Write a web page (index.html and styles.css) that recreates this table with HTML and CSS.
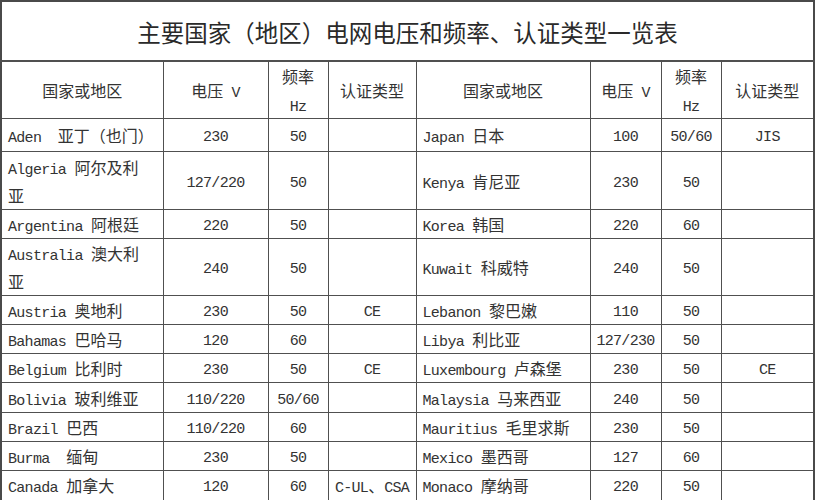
FILE: index.html
```html
<!DOCTYPE html>
<html lang="zh">
<head>
<meta charset="utf-8">
<title>主要国家（地区）电网电压和频率、认证类型一览表</title>
<link rel="stylesheet" href="styles.css">
</head>
<body>
<table class="sheet">
<colgroup>
<col class="c-name"><col class="c-volt"><col class="c-freq"><col class="c-cert">
<col class="c-name2"><col class="c-volt2"><col class="c-freq2"><col class="c-cert2">
</colgroup>
<tr class="row-title"><td colspan="8" class="title">主要国家（地区）电网电压和频率、认证类型一览表</td></tr>
<tr class="row-head">
<td class="ctr">国家或地区</td><td class="ctr">电压<span class="en"> V</span></td><td class="ctr">频率<br><span class="en">Hz</span></td><td class="ctr">认证类型</td>
<td class="ctr">国家或地区</td><td class="ctr">电压<span class="en"> V</span></td><td class="ctr">频率<br><span class="en">Hz</span></td><td class="ctr">认证类型</td>
</tr>
<tr class="row-first">
<td class="name"><span class="en">Aden  </span>亚丁（也门）</td><td class="num">230</td><td class="num">50</td><td class="num"></td>
<td class="name"><span class="en">Japan </span>日本</td><td class="num">100</td><td class="num">50/60</td><td class="num">JIS</td>
</tr>
<tr class="row-tall">
<td class="name"><span class="en">Algeria </span>阿尔及利<br>亚</td><td class="num">127/220</td><td class="num">50</td><td class="num"></td>
<td class="name"><span class="en">Kenya </span>肯尼亚</td><td class="num">230</td><td class="num">50</td><td class="num"></td>
</tr>
<tr class="row">
<td class="name"><span class="en">Argentina </span>阿根廷</td><td class="num">220</td><td class="num">50</td><td class="num"></td>
<td class="name"><span class="en">Korea </span>韩国</td><td class="num">220</td><td class="num">60</td><td class="num"></td>
</tr>
<tr class="row-tall2">
<td class="name"><span class="en">Australia </span>澳大利<br>亚</td><td class="num">240</td><td class="num">50</td><td class="num"></td>
<td class="name"><span class="en">Kuwait </span>科威特</td><td class="num">240</td><td class="num">50</td><td class="num"></td>
</tr>
<tr class="row">
<td class="name"><span class="en">Austria </span>奥地利</td><td class="num">230</td><td class="num">50</td><td class="num">CE</td>
<td class="name"><span class="en">Lebanon </span>黎巴嫩</td><td class="num">110</td><td class="num">50</td><td class="num"></td>
</tr>
<tr class="row">
<td class="name"><span class="en">Bahamas </span>巴哈马</td><td class="num">120</td><td class="num">60</td><td class="num"></td>
<td class="name"><span class="en">Libya </span>利比亚</td><td class="num">127/230</td><td class="num">50</td><td class="num"></td>
</tr>
<tr class="row">
<td class="name"><span class="en">Belgium </span>比利时</td><td class="num">230</td><td class="num">50</td><td class="num">CE</td>
<td class="name"><span class="en">Luxembourg </span>卢森堡</td><td class="num">230</td><td class="num">50</td><td class="num">CE</td>
</tr>
<tr class="row-b">
<td class="name"><span class="en">Bolivia </span>玻利维亚</td><td class="num">110/220</td><td class="num">50/60</td><td class="num"></td>
<td class="name"><span class="en">Malaysia </span>马来西亚</td><td class="num">240</td><td class="num">50</td><td class="num"></td>
</tr>
<tr class="row-s">
<td class="name"><span class="en">Brazil </span>巴西</td><td class="num">110/220</td><td class="num">60</td><td class="num"></td>
<td class="name"><span class="en">Mauritius </span>毛里求斯</td><td class="num">230</td><td class="num">50</td><td class="num"></td>
</tr>
<tr class="row">
<td class="name"><span class="en">Burma  </span>缅甸</td><td class="num">230</td><td class="num">50</td><td class="num"></td>
<td class="name"><span class="en">Mexico </span>墨西哥</td><td class="num">127</td><td class="num">60</td><td class="num"></td>
</tr>
<tr class="row-b">
<td class="name"><span class="en">Canada </span>加拿大</td><td class="num">120</td><td class="num">60</td><td class="num">C-UL<span class="zh">、</span>CSA</td>
<td class="name"><span class="en">Monaco </span>摩纳哥</td><td class="num">220</td><td class="num">50</td><td class="num"></td>
</tr>
</table>
</body>
</html>
```

FILE: styles.css
```css
html, body {
  margin: 0;
  padding: 0;
  background: #ffffff;
}

.sheet {
  border-collapse: collapse;
  table-layout: fixed;
  width: 813px;
  border: 2px solid #4a4a4a;
  font-family: "Noto Sans CJK SC", "Liberation Serif", serif;
  font-size: 16px;
  font-weight: 400;
  color: #333333;
}

.c-name { width: 162px; }
.c-volt { width: 105px; }
.c-freq { width: 60px; }
.c-cert { width: 88px; }
.c-name2 { width: 174px; }
.c-volt2 { width: 71px; }
.c-freq2 { width: 60px; }
.c-cert2 { width: 93px; }

.sheet td {
  border: 1px solid #505050;
  padding: 0;
  line-height: 28px;
  vertical-align: middle;
  white-space: pre;
  overflow: hidden;
}

.sheet .title {
  text-align: center;
  font-size: 23.5px;
  line-height: 30px;
  color: #2a2a2a;
  border-bottom-width: 2px;
  padding-top: 2px;
}

.row-title { height: 60px; }
.row-head { height: 56px; }
.row-first { height: 33px; }
.row-tall { height: 58px; }
.row-tall2 { height: 57px; }
.row { height: 29px; }
.row-b { height: 30px; }
.row-s { height: 28px; }

.ctr {
  text-align: center;
}

.name {
  text-align: left;
  padding-left: 6px !important;
}

.sheet .num {
  text-align: center;
  font-family: "Liberation Mono", "Noto Sans CJK SC", monospace;
  font-size: 15px;
  letter-spacing: -0.7px;
  line-height: 20px;
  padding-top: 6px;
}

.en {
  font-family: "Liberation Mono", monospace;
  font-size: 15px;
  letter-spacing: -0.7px;
  line-height: 1;
}

.zh {
  font-family: "Noto Sans CJK SC", sans-serif;
  font-size: 16px;
  letter-spacing: 0;
  line-height: 1;
}
```
